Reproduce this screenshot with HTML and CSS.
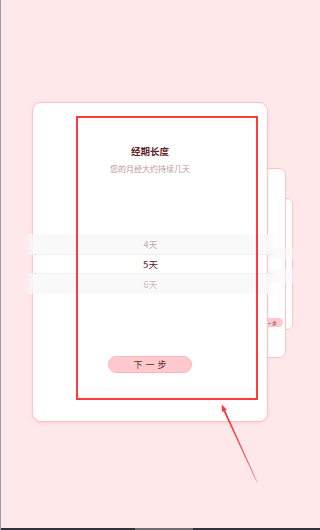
FILE: index.html
```html
<!DOCTYPE html>
<html lang="zh-CN">
<head>
<meta charset="utf-8">
<title>经期长度</title>
<link rel="stylesheet" href="styles.css">
</head>
<body>
<div class="page">
  <div class="stage">
    <div class="deck">
      <div class="card card-back3"></div>
      <div class="card card-back2">
        <div class="ghost-band ghost-band-1"></div>
        <div class="ghost-band ghost-band-2"></div>
        <div class="ghost-btn">下一步</div>
      </div>
      <div class="card card-main">
        <div class="title">经期长度</div>
        <div class="subtitle">您的月经大约持续几天</div>
        <div class="picker">
          <div class="row row-side">4天</div>
          <div class="row row-active">5天</div>
          <div class="row row-side row-far">6天</div>
        </div>
        <button class="next-btn">下一步</button>
      </div>
      <div class="highlight-box"></div>
    </div>
  </div>
  <div class="bottom-bar"><div class="bottom-handle"></div></div>
  <svg class="arrow" width="300" height="530" viewBox="0 0 300 530" aria-hidden="true">
    <polygon points="221.6,404.4 226.9,409.8 222.1,412.1" fill="#ff3434"/>
    <polygon points="225.3,410.4 223.6,411.3 256.9,482.1 257.2,481.9" fill="#ff3434"/>
  </svg>
</div>
</body>
</html>
```
FILE: styles.css
```css
* { box-sizing: border-box; }
html, body { margin: 0; padding: 0; }
html { background: #ffe8ea; }
body {
  height: 530px;
  overflow: hidden;
  background: #ffe8ea;
  font-family: "Noto Sans CJK SC", "Noto Sans", sans-serif;
  border-left: 1px solid #9aa0aa;
}
.page {
  position: relative;
  height: 530px;
  display: flex;
  flex-direction: column;
}
.stage {
  flex: 1;
  padding-top: 102px;
}
.deck {
  position: relative;
  margin-left: 31px;
  width: 236px;
  height: 320px;
}
.card {
  background: #fff;
  border: 1px solid #ffc2c4;
  border-radius: 9px;
}
.card-main {
  position: relative;
  z-index: 3;
  height: 100%;
  display: flex;
  flex-direction: column;
  align-items: center;
  padding-top: 41px;
  box-shadow: 0 1px 3px rgba(255, 140, 150, 0.25);
}
.card-back2 {
  position: absolute;
  z-index: 2;
  left: 120px;
  width: 134px;
  top: 66px;
  height: 190px;
  border-radius: 7px;
}
.card-back3 {
  position: absolute;
  z-index: 1;
  left: 140px;
  width: 121px;
  top: 96px;
  height: 132px;
  border-radius: 6px;
}
.ghost-band {
  position: absolute;
  left: 0;
  right: -8px;
  background: rgba(246, 246, 246, 0.6);
}
.ghost-band-1 { top: 79px; height: 11px; }
.ghost-band-2 { top: 100px; height: 14px; }
.ghost-btn {
  position: absolute;
  right: 2px;
  top: 149px;
  width: 40px;
  height: 9px;
  border-radius: 5px;
  background: #ffc9cd;
  color: #6a3030;
  font-size: 5px;
  line-height: 9px;
  text-align: right;
  padding-right: 5px;
  letter-spacing: 1px;
}
.title {
  font-size: 9.5px;
  line-height: 14px;
  font-weight: 700;
  color: #5e2326;
}
.subtitle {
  margin-top: 5px;
  font-size: 8px;
  line-height: 12px;
  color: #bb9798;
}
.picker {
  margin-top: 59px;
  align-self: stretch;
  margin-left: -5px;
  margin-right: -6px;
}
.row {
  height: 20px;
  display: flex;
  align-items: center;
  justify-content: center;
  font-size: 9px;
}
.row-side {
  background: linear-gradient(90deg, rgba(248,248,248,0.5) 0, rgba(249,249,249,0.92) 6px, rgba(249,249,249,0.92) calc(100% - 6px), rgba(248,248,248,0.5) 100%);
  color: #c4aaab;
}
.row-far { color: #cdb9ba; }
.row-active {
  border-top: 1px solid #f1eded;
  border-bottom: 1px solid #f1eded;
  color: #5a2326;
  font-size: 9.5px;
}
.next-btn {
  margin-top: 62px;
  width: 84px;
  height: 17px;
  border-radius: 9px;
  border: 1px solid #ffb6ba;
  background: #ffc9cd;
  color: #5e2a2c;
  font-family: inherit;
  font-size: 9px;
  line-height: 15px;
  letter-spacing: 3px;
  padding: 0 0 0 3px;
}
.highlight-box {
  position: absolute;
  z-index: 4;
  left: 44px;
  top: 14px;
  width: 182px;
  height: 284px;
  border: 2px solid #ff3a3a;
}
.bottom-bar {
  height: 2px;
  margin-left: -1px;
  background: #2f3238;
  display: flex;
}
.bottom-handle {
  margin-left: 135px;
  width: 58px;
  height: 2px;
  background: #6e6e70;
}
.arrow {
  position: absolute;
  left: -1px;
  top: 0;
  z-index: 10;
  pointer-events: none;
}
```
